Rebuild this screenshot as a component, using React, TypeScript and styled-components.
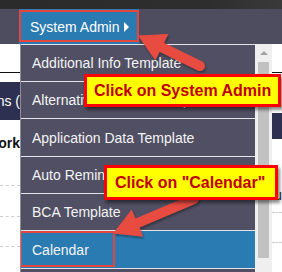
import React from "react";
import styled, { createGlobalStyle } from "styled-components";

const GlobalStyle = createGlobalStyle`
  html, body {
    margin: 0;
    padding: 0;
    background: #ffffff;
  }
  body {
    font-family: "Liberation Sans", Arial, sans-serif;
  }
`;

const Page = styled.div`
  position: relative;
  width: 282px;
  height: 272px;
  overflow: hidden;
  background: #ffffff;
`;

const TopStrip = styled.div`
  height: 9px;
  background: linear-gradient(90deg, #2b2b2b 0%, #2e2e2e 75%, #3a3a3a 100%);
`;

const NavBar = styled.div`
  height: 35px;
  background: #4e4d5f;
  display: flex;
  align-items: stretch;
  padding-left: 19px;
`;

const NavButton = styled.div`
  position: relative;
  width: 120px;
  background: #2a7bb1;
  color: #ffffff;
  font-size: 14px;
  display: flex;
  align-items: center;
  gap: 5px;
  padding-left: 11px;
  box-sizing: border-box;

  &::after {
    content: "";
    position: absolute;
    left: 0;
    right: 0;
    top: 1px;
    bottom: 2px;
    border: 2px solid #e4463d;
  }
`;

const Caret = styled.span`
  width: 0;
  height: 0;
  border-top: 5px solid transparent;
  border-bottom: 5px solid transparent;
  border-left: 5px solid #ffffff;
  margin-top: 1px;
`;

const Content = styled.div`
  display: flex;
  height: 228px;
`;

const Side = styled.div<{ $w: number }>`
  width: ${(p) => p.$w}px;
  display: flex;
  flex-direction: column;
  overflow: hidden;
`;

const Filler = styled.div`
  flex: 1;
`;

const Block = styled.div<{ $h: number; $rule?: "solid" | "dashed" }>`
  height: ${(p) => p.$h}px;
  flex-shrink: 0;
  box-sizing: border-box;
  display: flex;
  align-items: center;
  justify-content: flex-end;
  white-space: nowrap;
  font-size: 14px;
  border-bottom: ${(p) =>
    p.$rule === "solid"
      ? "1px solid #111111"
      : p.$rule === "dashed"
      ? "1px dashed #cfcfcf"
      : "none"};
`;

const Navy = styled(Block)`
  background: #2d3050;
  color: #ffffff;
`;

const BoldText = styled.span`
  font-weight: bold;
  color: #111111;
`;

const RightText = styled.span`
  color: #333333;
  align-self: flex-end;
  margin-left: 1px;
`;

const Menu = styled.div`
  position: absolute;
  left: 20px;
  top: 44px;
  width: 252px;
  height: 228px;
  display: flex;
  overflow: hidden;
  border-left: 1px solid #8e8d9c;
  box-sizing: border-box;
`;

const MenuList = styled.div`
  flex: 1;
  background: #504f63;
  display: flex;
  flex-direction: column;
`;

const MenuItem = styled.div<{ $tall?: boolean; $active?: boolean }>`
  position: relative;
  height: ${(p) => (p.$tall ? 38 : 37)}px;
  flex-shrink: 0;
  box-sizing: border-box;
  border-top: 1px solid #e4e4e8;
  background: ${(p) => (p.$active ? "#2a7bb1" : "transparent")};
  color: #f4f4f4;
  font-size: 14px;
  display: flex;
  align-items: center;
  padding-left: 11px;
  white-space: nowrap;
`;

const ItemFrame = styled.div`
  position: absolute;
  left: -1px;
  top: 0;
  width: 95px;
  height: 36px;
  box-sizing: border-box;
  border: 2px solid #e4463d;
`;

const Scrollbar = styled.div`
  width: 17px;
  background: #efefef;
  display: flex;
  flex-direction: column;
  align-items: center;
`;

const ScrollArrow = styled.div`
  margin-top: 7px;
  width: 0;
  height: 0;
  border-left: 4px solid transparent;
  border-right: 4px solid transparent;
  border-bottom: 4px solid #a3a3a3;
`;

const ScrollThumb = styled.div`
  margin-top: 7px;
  width: 11px;
  height: 196px;
  background: #c1c1c1;
`;

const Arrows = styled.svg`
  position: absolute;
  left: 0;
  top: 0;
  pointer-events: none;
`;

const Callout = styled.div<{ $x: number; $y: number; $w: number; $h: number; $pad: number }>`
  position: absolute;
  left: ${(p) => p.$x}px;
  top: ${(p) => p.$y}px;
  width: ${(p) => p.$w}px;
  height: ${(p) => p.$h}px;
  box-sizing: border-box;
  border: 3px solid #ff0000;
  background: #ffff00;
  color: #c00000;
  font-weight: bold;
  font-size: 16px;
  display: flex;
  align-items: center;
  padding-left: ${(p) => p.$pad}px;
  white-space: nowrap;
  box-shadow: 2px 3px 3px rgba(0, 0, 0, 0.45);
`;

function arrowPoints(tx: number, ty: number, hx: number, hy: number) {
  const dx = hx - tx;
  const dy = hy - ty;
  const len = Math.hypot(dx, dy);
  const ux = dx / len;
  const uy = dy / len;
  const px = -uy;
  const py = ux;
  const headLen = 25;
  const half = 14;
  const bx = hx - ux * headLen;
  const by = hy - uy * headLen;
  return {
    shaft: { x1: tx, y1: ty, x2: bx + ux * 2, y2: by + uy * 2 },
    head: `${hx},${hy} ${bx + px * half},${by + py * half} ${bx - px * half},${by - py * half}`,
  };
}

const arrowList = [
  arrowPoints(200, 66, 139, 36),
  arrowPoints(194, 199, 114, 233),
];

const items = [
  "Additional Info Template",
  "Alternative Address Template",
  "Application Data Template",
  "Auto Reminder Template",
  "BCA Template",
  "Calendar",
  "",
];

export default function App() {
  return (
    <Page>
      <GlobalStyle />
      <TopStrip />
      <NavBar>
        <NavButton>
          System Admin
          <Caret />
        </NavButton>
      </NavBar>

      <Content>
        <Side $w={20}>
          <Block $h={29} $rule="solid" />
          <Block $h={9} />
          <Navy $h={38}>Actions (</Navy>
          <Block $h={45}>
            <BoldText>Work</BoldText>
          </Block>
          <Block $h={21} $rule="dashed" />
          <Block $h={31} $rule="dashed" />
          <Block $h={30} $rule="dashed" />
        </Side>
        <Filler />
        <Side $w={10}>
          <Block $h={29} $rule="solid" />
          <Block $h={40} />
          <Navy $h={26} />
          <Block $h={64}>
            <RightText>lu</RightText>
          </Block>
          <Block $h={10} $rule="dashed" />
          <Block $h={30} $rule="dashed" />
        </Side>
      </Content>

      <Menu>
        <MenuList>
          {items.map((label, i) => (
            <MenuItem key={i} $tall={i === 2 || i === 5} $active={label === "Calendar"}>
              {label}
              {label === "Calendar" && <ItemFrame />}
            </MenuItem>
          ))}
        </MenuList>
        <Scrollbar>
          <ScrollArrow />
          <ScrollThumb />
        </Scrollbar>
      </Menu>

      <Arrows width="282" height="272" viewBox="0 0 282 272">
        <defs>
          <filter id="arrowShadow" x="-20%" y="-20%" width="140%" height="140%">
            <feDropShadow dx="1" dy="2" stdDeviation="1.2" floodColor="#000" floodOpacity="0.35" />
          </filter>
        </defs>
        {arrowList.map((a, i) => (
          <g key={i} fill="#e84b3f" stroke="#e84b3f" filter="url(#arrowShadow)">
            <line {...a.shaft} strokeWidth={10} strokeLinecap="round" />
            <polygon points={a.head} strokeWidth={1} strokeLinejoin="round" />
          </g>
        ))}
      </Arrows>

      <Callout $x={84} $y={74} $w={197} $h={33} $pad={7}>
        Click on System Admin
      </Callout>
      <Callout $x={104} $y={165} $w={174} $h={35} $pad={8}>
        Click on "Calendar"
      </Callout>
    </Page>
  );
}
